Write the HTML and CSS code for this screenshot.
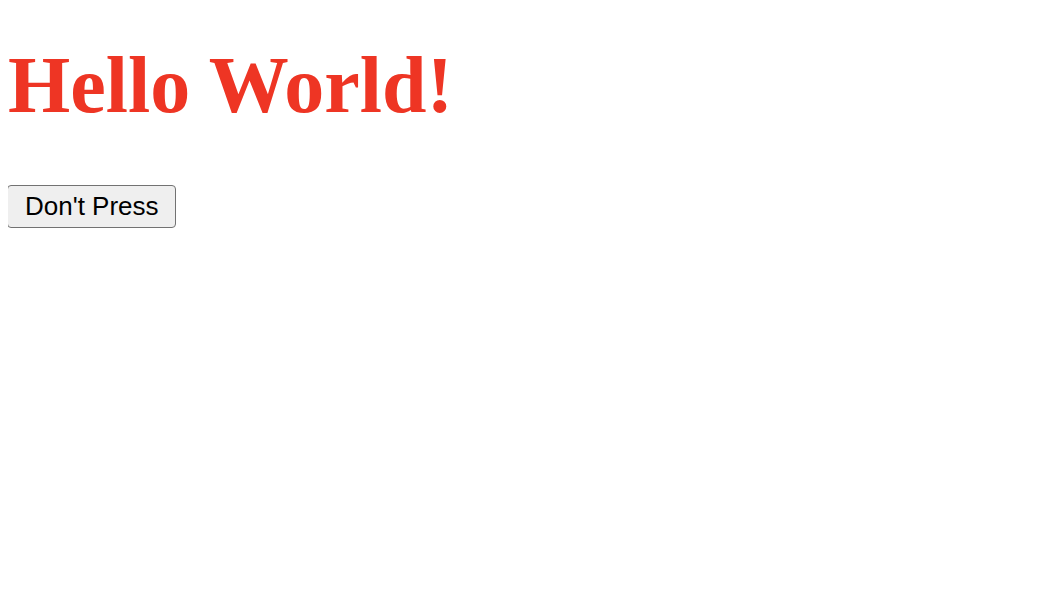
FILE: index.html
```html
<!DOCTYPE html>
<html>
<head>
<meta charset="utf-8">
<link rel="stylesheet" href="styles.css">
</head>
<body>
<h1 class="title">Hello World!</h1>
<button class="btn">Don't Press</button>
</body>
</html>
```

FILE: styles.css
```css
body {
  margin: 8px;
  background: #ffffff;
  font-family: "Liberation Serif", serif;
}
.title {
  font-family: "Liberation Serif", serif;
  font-weight: bold;
  font-size: 80px;
  line-height: 92px;
  color: #ee3524;
  margin: 31px 0 54px;
}
.btn {
  font-family: "Liberation Sans", Arial, sans-serif;
  font-size: 26px;
  line-height: 30px;
  color: #000000;
  background: #efefef;
  border: 1px solid #727272;
  border-radius: 4px;
  padding: 5px 16px 6px 17px;
  margin: 0 0 0 -1px;
}
```
